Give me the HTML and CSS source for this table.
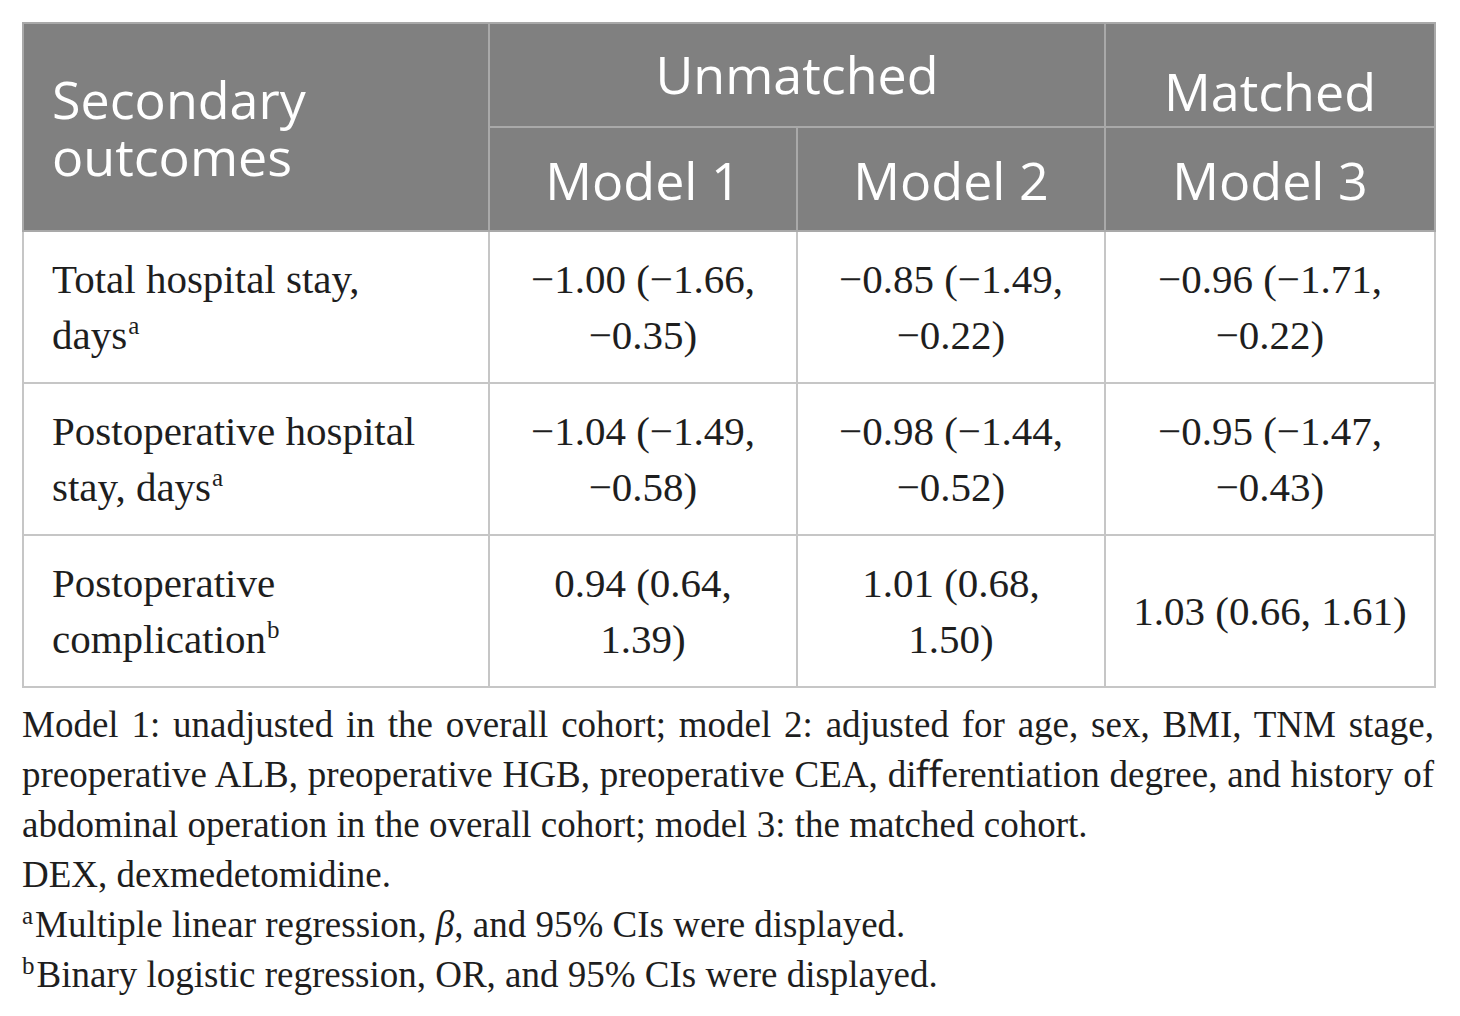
FILE: index.html
```html
<!DOCTYPE html>
<html lang="en">
<head>
<meta charset="utf-8">
<title>Secondary outcomes</title>
<link rel="stylesheet" href="styles.css">
</head>
<body>
<div class="wrap">
  <table class="tbl">
    <colgroup>
      <col class="c-label">
      <col class="c-m">
      <col class="c-m">
      <col class="c-m3">
    </colgroup>
    <thead>
      <tr class="hrow">
        <th rowspan="2" class="h-label">Secondary<br>outcomes</th>
        <th colspan="2" class="h-group">Unmatched</th>
        <th class="h-matched">Matched</th>
      </tr>
      <tr class="hrow">
        <th>Model 1</th>
        <th>Model 2</th>
        <th>Model 3</th>
      </tr>
    </thead>
    <tbody>
      <tr class="brow">
        <td class="label">Total hospital stay, <span class="nw">days<sup>a</sup></span></td>
        <td>&minus;1.00 (&minus;1.66, &minus;0.35)</td>
        <td>&minus;0.85 (&minus;1.49, &minus;0.22)</td>
        <td>&minus;0.96 (&minus;1.71, &minus;0.22)</td>
      </tr>
      <tr class="brow">
        <td class="label">Postoperative hospital stay, <span class="nw">days<sup>a</sup></span></td>
        <td>&minus;1.04 (&minus;1.49, &minus;0.58)</td>
        <td>&minus;0.98 (&minus;1.44, &minus;0.52)</td>
        <td>&minus;0.95 (&minus;1.47, &minus;0.43)</td>
      </tr>
      <tr class="brow">
        <td class="label">Postoperative <span class="nw">complication<sup>b</sup></span></td>
        <td>0.94 (0.64, 1.39)</td>
        <td>1.01 (0.68, 1.50)</td>
        <td>1.03 (0.66, 1.61)</td>
      </tr>
    </tbody>
  </table>
  <div class="notes">
    <span class="jline">Model 1: unadjusted in the overall cohort; model 2: adjusted for age, sex, BMI, TNM stage,</span>
    <span class="jline">preoperative ALB, preoperative HGB, preoperative CEA, diﬀerentiation degree, and history of</span>
    <span class="line">abdominal operation in the overall cohort; model 3: the matched cohort.</span>
    <span class="line">DEX, dexmedetomidine.</span>
    <span class="line"><sup>a</sup>Multiple linear regression, <i>β</i>, and 95% CIs were displayed.</span>
    <span class="line"><sup>b</sup>Binary logistic regression, OR, and 95% CIs were displayed.</span>
  </div>
</div>
</body>
</html>
```

FILE: styles.css
```css
html, body {
  margin: 0;
  padding: 0;
  background: #ffffff;
}

.wrap {
  padding: 22px 26px 0 22px;
  width: 1412px;
}

.tbl {
  width: 1412px;
  table-layout: fixed;
  border-collapse: collapse;
  border: 2px solid #c6c6c6;
}

.c-label { width: 466px; }
.c-m { width: 308px; }
.c-m3 { width: 330px; }

.tbl th {
  background: #808080;
  color: #ffffff;
  font-family: "Open Sans", "Liberation Sans", sans-serif;
  font-weight: 400;
  font-size: 52px;
  line-height: 57px;
  text-align: center;
  vertical-align: middle;
  border: 2px solid #a9a9a9;
  padding: 0;
}

.tbl th.h-label {
  text-align: left;
  padding-left: 28px;
}

.tbl th.h-group {
  padding-bottom: 4px;
}

.tbl th.h-matched {
  padding-top: 30px;
}

.hrow { height: 104px; }

.brow { height: 152px; }

.tbl td {
  font-family: "Liberation Serif", "Times New Roman", serif;
  font-size: 41px;
  line-height: 56px;
  color: #1e1e1e;
  text-align: center;
  vertical-align: middle;
  border: 2px solid #c6c6c6;
  padding: 18px 25px;
}

.tbl td.label {
  text-align: left;
  padding: 18px 40px 18px 28px;
}

.nw {
  white-space: nowrap;
}

.tbl sup {
  font-size: 25px;
  line-height: 0;
  vertical-align: 15px;
  margin-left: 1px;
}

.notes {
  margin-top: 12px;
  font-family: "Liberation Serif", "Times New Roman", serif;
  font-size: 37px;
  line-height: 50px;
  color: #1e1e1e;
}

.jline {
  display: block;
  text-align: justify;
  text-align-last: justify;
}

.line {
  display: block;
}

.notes sup {
  font-size: 25px;
  line-height: 0;
  vertical-align: 13px;
  margin-right: 2px;
}
```
